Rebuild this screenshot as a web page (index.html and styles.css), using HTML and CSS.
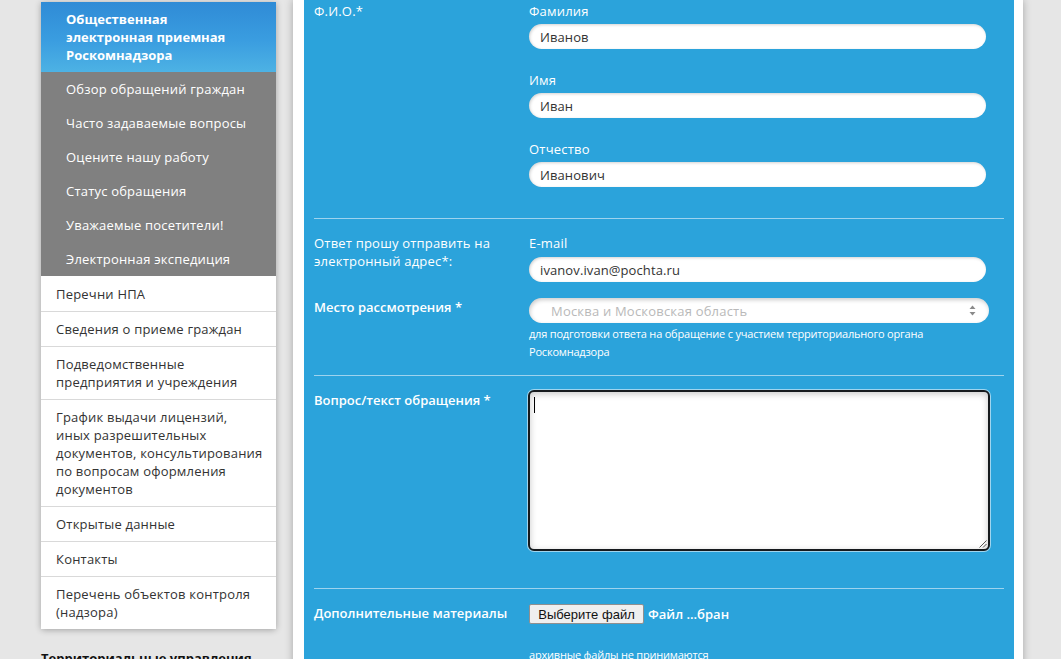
FILE: index.html
```html
<!DOCTYPE html>
<html lang="ru">
<head>
<meta charset="utf-8">
<title>Общественная электронная приемная Роскомнадзора</title>
<link rel="stylesheet" href="styles.css">
</head>
<body>
<div class="page">
  <aside class="side">
    <nav class="menu">
      <a class="m-active">Общественная<br>электронная приемная<br>Роскомнадзора</a>
      <a class="m-sub">Обзор обращений граждан</a>
      <a class="m-sub">Часто задаваемые вопросы</a>
      <a class="m-sub">Оцените нашу работу</a>
      <a class="m-sub">Статус обращения</a>
      <a class="m-sub">Уважаемые посетители!</a>
      <a class="m-sub">Электронная экспедиция</a>
      <a class="m-item">Перечни НПА</a>
      <a class="m-item">Сведения о приеме граждан</a>
      <a class="m-item">Подведомственные<br>предприятия и учреждения</a>
      <a class="m-item">График выдачи лицензий,<br>иных разрешительных<br>документов, консультирования<br>по вопросам оформления<br>документов</a>
      <a class="m-item">Открытые данные</a>
      <a class="m-item">Контакты</a>
      <a class="m-item">Перечень объектов контроля<br>(надзора)</a>
    </nav>
    <div class="side-title">Территориальные управления</div>
  </aside>

  <main class="main">
    <div class="panel">
      <section class="sec sec1">
        <div class="field">
          <div class="lbl">Ф.И.О.*</div>
          <div class="col">
            <div class="sub">Фамилия</div>
            <input class="inp" type="text" value="Иванов" readonly>
            <div class="sub next">Имя</div>
            <input class="inp" type="text" value="Иван" readonly>
            <div class="sub next">Отчество</div>
            <input class="inp" type="text" value="Иванович" readonly>
          </div>
        </div>
      </section>

      <section class="sec sec2">
        <div class="field">
          <div class="lbl">Ответ прошу отправить на<br>электронный адрес*:</div>
          <div class="col">
            <div class="sub sub-mail">E-mail</div>
            <input class="inp" type="text" value="ivanov.ivan@pochta.ru" readonly>
          </div>
        </div>
        <div class="field field-place">
          <div class="lbl lbl-strong">Место рассмотрения *</div>
          <div class="col">
            <div class="select">
              <span class="select-text">Москва и Московская область</span>
              <svg class="select-arrows" width="7" height="11" viewBox="0 0 7 11"><path d="M3.5 0.5 L6.5 4 L0.5 4 Z" fill="#8a8a8a"/><path d="M3.5 10.5 L6.5 7 L0.5 7 Z" fill="#8a8a8a"/></svg>
            </div>
            <div class="hint">для подготовки ответа на обращение с участием территориального органа<br>Роскомнадзора</div>
          </div>
        </div>
      </section>

      <section class="sec sec3">
        <div class="field">
          <div class="lbl lbl-strong lbl-ta">Вопрос/текст обращения *</div>
          <div class="col">
            <div class="textarea">
              <span class="caret"></span>
              <svg class="grip" width="9" height="9" viewBox="0 0 9 9"><path d="M8.5 1.5 L1.5 8.5 M8.5 5 L5 8.5" stroke="#555" stroke-width="1"/></svg>
            </div>
          </div>
        </div>
      </section>

      <section class="sec4">
        <div class="field">
          <div class="lbl lbl-strong">Дополнительные материалы</div>
          <div class="col">
            <div class="file-row">
              <button class="file-btn" type="button">Выберите файл</button>
              <span class="file-name">Файл ...бран</span>
            </div>
            <div class="hint hint-arch">архивные файлы не принимаются</div>
          </div>
        </div>
      </section>
    </div>
  </main>
</div>
</body>
</html>
```
FILE: styles.css
```css
html, body {
  margin: 0;
  padding: 0;
  overflow: hidden;
  height: 100%;
}
body {
  background: #e6e6e6;
  font-family: "Open Sans", "Noto Sans", sans-serif;
  font-size: 13px;
  color: #333;
  letter-spacing: 0.2px;
}
.page {
  display: flex;
  align-items: flex-start;
  padding-left: 41px;
}

/* Sidebar */
.side {
  width: 235px;
  flex: none;
  margin-top: 2px;
}
.menu {
  display: flex;
  flex-direction: column;
  background: #fff;
  box-shadow: 0 1px 6px rgba(0, 0, 0, 0.3);
  border-radius: 0 0 3px 3px;
}
.menu a {
  display: block;
  line-height: 18px;
  font-size: 13px;
}
.m-active {
  background: linear-gradient(180deg, #2f8bd6 0%, #3a9de0 55%, #4db2e4 100%);
  color: #fff;
  font-weight: 700;
  padding: 8px 10px 8px 25px;
  letter-spacing: 0;
}
.m-sub {
  background: #808080;
  color: #fff;
  padding: 8px 10px 8px 25px;
}
.m-item {
  background: #fff;
  color: #333;
  padding: 8px 8px 8px 15px;
  border-top: 1px solid #d9d9d9;
}
.m-sub + .m-item {
  border-top: 0;
  padding-top: 9px;
}
.side-title {
  margin-top: 20px;
  font-weight: 700;
  line-height: 18px;
  color: #111;
  letter-spacing: 0;
}

/* Main */
.main {
  width: 730px;
  flex: none;
  margin-left: 17px;
  background: #fff;
  box-shadow: 0 0 8px rgba(0, 0, 0, 0.28);
  padding: 0 9px 0 11px;
  box-sizing: border-box;
  min-height: 700px;
}
.panel {
  background: #2ba3db;
  padding: 0 10px;
  min-height: 700px;
}
.sec {
  border-bottom: 1px solid #9ed3ee;
}
.sec1 { padding: 2px 0 31px; }
.sec2 { padding: 15px 0 14px; }
.sec3 { padding: 14px 0 37px; }
.sec4 { padding: 15px 0 0; }

.field {
  display: grid;
  grid-template-columns: 215px 462px;
  align-items: start;
}
.field-place { margin-top: 16px; }
.col {
  display: flex;
  flex-direction: column;
}
.lbl {
  color: #fff;
  line-height: 18px;
  font-size: 13px;
}
.lbl-strong { font-weight: 600; letter-spacing: 0; }
.lbl-ta { margin-top: 1px; }
.sub {
  color: #fff;
  line-height: 18px;
  margin-bottom: 4px;
}
.sub.next { margin-top: 22px; }
.sub-mail { margin-bottom: 5px; }

.inp {
  display: block;
  width: 457px;
  height: 25px;
  box-sizing: border-box;
  border: 0;
  border-radius: 13px;
  background: #fff;
  padding: 0 11px;
  font-family: "Open Sans", "Noto Sans", sans-serif;
  font-size: 13px;
  letter-spacing: 0.1px;
  color: #333;
  box-shadow: inset 1px 1px 3px rgba(0, 0, 0, 0.18);
  outline: none;
}

.select {
  display: flex;
  align-items: center;
  justify-content: space-between;
  width: 460px;
  height: 25px;
  box-sizing: border-box;
  border-radius: 13px;
  background: #fff;
  padding: 0 13px 0 22px;
  box-shadow: inset 1px 2px 4px rgba(0, 0, 0, 0.2);
}
.select-text {
  color: #b9b9b9;
  font-size: 13px;
}
.hint {
  color: #fff;
  font-size: 11px;
  line-height: 18px;
  margin-top: 2px;
  letter-spacing: -0.2px;
}
.hint-arch { margin-top: 22px; }

.textarea {
  position: relative;
  width: 462px;
  height: 161px;
  box-sizing: border-box;
  margin-left: -1px;
  background: #fff;
  border: 2px solid #161a1d;
  border-radius: 6px;
  box-shadow: 0 0 0 1px rgba(255, 255, 255, 0.55), inset 0 2px 7px rgba(0, 0, 0, 0.22);
}
.caret {
  position: absolute;
  left: 4px;
  top: 5px;
  width: 1px;
  height: 16px;
  background: #000;
}
.grip {
  position: absolute;
  right: 1px;
  bottom: 1px;
}

.file-row {
  display: flex;
  align-items: center;
  height: 20px;
}
.file-btn {
  height: 20px;
  width: 115px;
  box-sizing: border-box;
  padding: 0 6px;
  border: 1px solid #8f8f8f;
  border-radius: 2px;
  background: #efefef;
  font-family: "Liberation Sans", Arial, sans-serif;
  font-size: 13px;
  letter-spacing: 0;
  color: #111;
}
.file-name {
  margin-left: 4px;
  color: #fff;
  font-weight: 600;
  font-size: 13px;
  letter-spacing: 0;
}
```
